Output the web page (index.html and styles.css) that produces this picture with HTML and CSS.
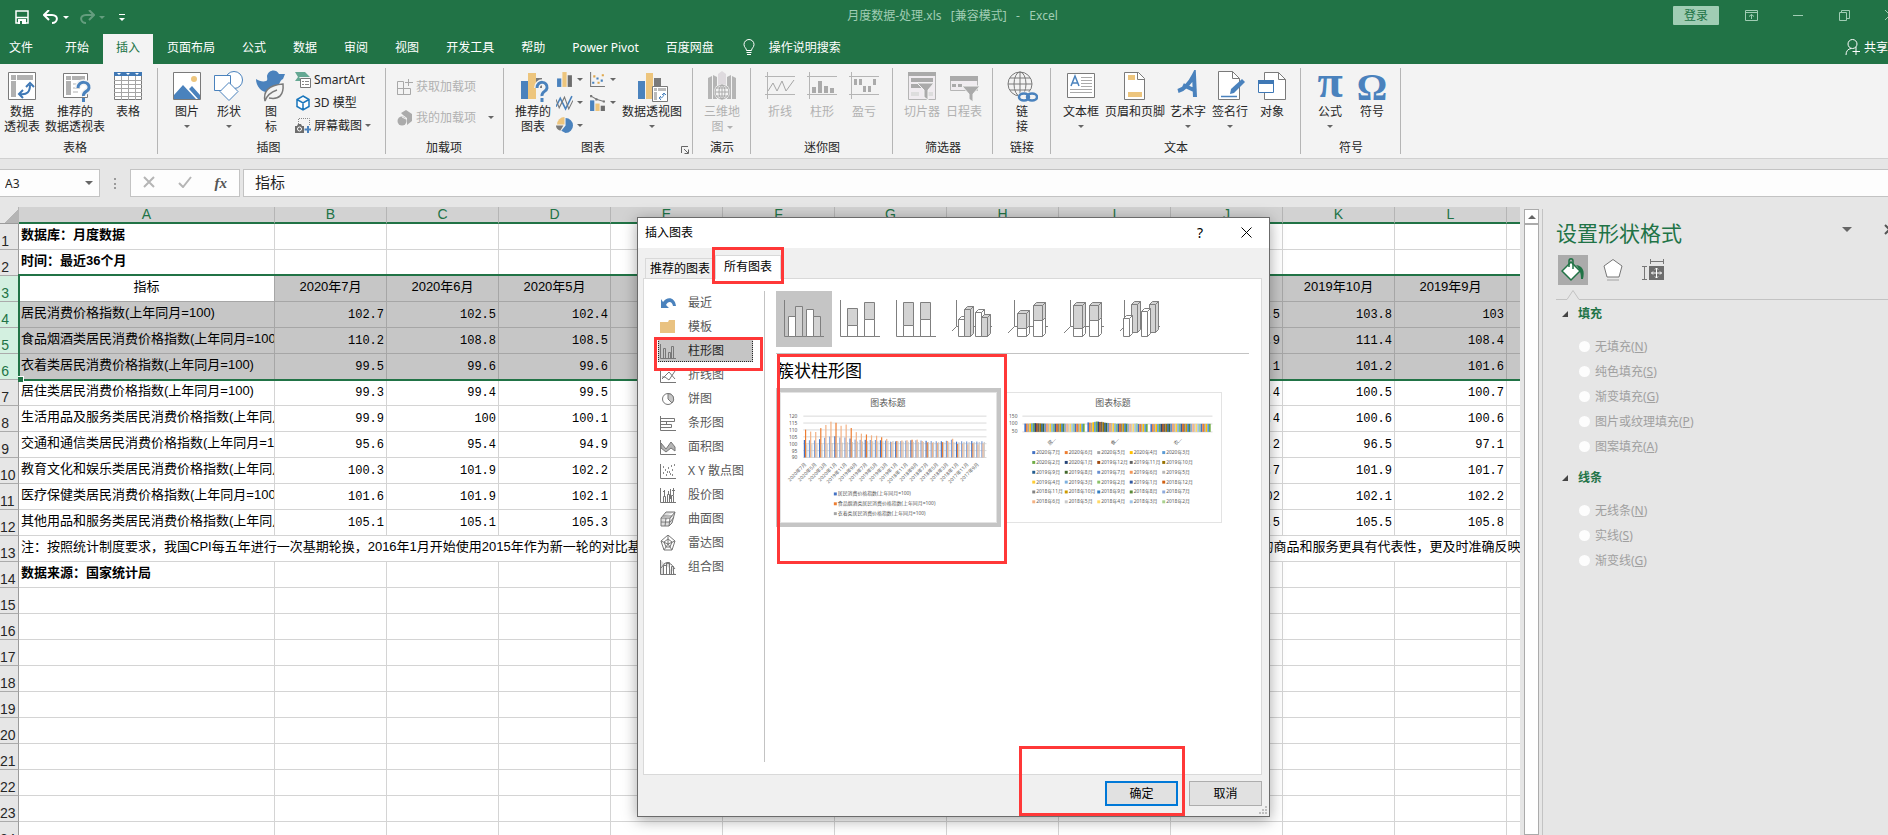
FILE: index.html
```html
<!DOCTYPE html>
<html lang="zh-CN">
<head>
    <meta charset="UTF-8">
    <meta name="viewport" content="width=device-width, initial-scale=1.0">
    <title>月度数据-处理.xls - Excel</title>
    <link rel="stylesheet" href="styles.css">
</head>
<body>
    <header class="title-bar">
        <div class="quick-access">
            <button aria-label="保存"><svg width="14" height="14" viewBox="0 0 14 14"><path d="M1 1h12v12H1zM1 7.500h12" fill="none" stroke="#fff" stroke-width="1.500"/><path d="M3 9h8v5H3z" fill="#fff"/><path d="M5 11h2v3H5z" fill="#217346"/></svg></button>
            <button class="undo" aria-label="撤消"><svg width="16" height="14" viewBox="0 0 16 14"><path d="M6 0L1 5l5 5M2 5h7c7 0 6 8 0 8" fill="none" stroke="#fff" stroke-width="2"/></svg><i class="caret"></i></button>
            <button class="undo faded" aria-label="恢复"><svg width="16" height="14" viewBox="0 0 16 14"><path d="M10 0l5 5-5 5M14 5H7c-7 0-6 8 0 8" fill="none" stroke="#fff" stroke-width="2"/></svg><i class="caret"></i></button>
            <button class="more" aria-label="自定义快速访问工具栏"><i class="caret"></i></button>
        </div>
        <div class="doc-title">月度数据-处理.xls&nbsp;&nbsp; [兼容模式]&nbsp;&nbsp; -&nbsp;&nbsp; Excel</div>
        <div class="window-buttons">
            <button class="login">登录</button>
            <button aria-label="功能区显示选项"><svg width="13" height="11" viewBox="0 0 13 11"><path d="M.5.5h12v10H.5zM0 2.500h13M6.500 9V4.500M4 6.500l2.500-2 2.500 2" fill="none" stroke="#a0cdb4"/></svg></button>
            <button aria-label="最小化"><svg width="11" height="11" viewBox="0 0 11 11"><path d="M0 5.500h10" stroke="#a0cdb4"/></svg></button>
            <button aria-label="还原"><svg width="11" height="11" viewBox="0 0 11 11"><path d="M.5 2.500h7v8h-7zM2.500 2V.5h8v8H8" fill="none" stroke="#a0cdb4"/></svg></button>
            <button aria-label="关闭"><svg width="11" height="11" viewBox="0 0 11 11"><path d="M0 0l10 10M10 0L0 10" stroke="#a0cdb4"/></svg></button>
        </div>
    </header>

    <nav class="tabs">
        <button class="file">文件</button>
        <button>开始</button>
        <button class="active">插入</button>
        <button>页面布局</button>
        <button>公式</button>
        <button>数据</button>
        <button>审阅</button>
        <button>视图</button>
        <button>开发工具</button>
        <button>帮助</button>
        <button>Power Pivot</button>
        <button>百度网盘</button>
        <button class="tell-me"><svg width="12" height="17" viewBox="0 0 12 17"><path d="M3.500 11.500C3.500 9 1 8.500 1 5.500a5 5 0 0 1 10 0c0 3-2.500 3.500-2.500 6zM3.500 13.500h5M4 15.500h4" fill="none" stroke="#fff"/></svg>操作说明搜索</button>
        <button class="share"><svg width="16" height="17" viewBox="0 0 16 17"><path d="M1 16c0-4 2-6 5-6.500M11 16v-8M7.500 12.500H15" fill="none" stroke="#fff"/><circle cx="7.500" cy="5" r="4.500" fill="none" stroke="#fff"/></svg>共享</button>
    </nav>

    <div class="ribbon">
        <div class="group first">
            <div class="tools">
                <button class="big"><svg viewBox="0 0 32 32"><path d="M2.500 2.500h27v27h-27z" fill="#fff" stroke="#7a7a7a"/><path d="M5 5h5v5H5zM11 5h16v5H11zM5 11h5v16H5z" fill="#b1b1b1"/><path d="M14 24c7 1 10-2 10-9M20 17l4-4 4 4M17 20l-4 4 4 4" fill="none" stroke="#3f78b5" stroke-width="2"/></svg><span>数据<br>透视表</span></button>
                <button class="big w64"><svg viewBox="0 0 32 32"><path d="M4.500 3.500h24v24h-24z" fill="#fff" stroke="#7a7a7a"/><path d="M7 6h5v4H7zM13 6h13v4H13zM7 11h5v14H7z" fill="#b1b1b1"/><path d="M14 14h9M14 18h7M14 22h5" stroke="#b1b1b1"/><path d="M19 18c0-8 12-7 11 0-.5 4-6 3-5.500 8M24.500 28v4" fill="none" stroke="#f3f3f3" stroke-width="6"/><path d="M19 18c0-8 12-7 11 0-.5 4-6 3-5.500 8M24.500 28v4" fill="none" stroke="#4a82bd" stroke-width="3"/></svg><span>推荐的<br>数据透视表</span></button>
                <button class="big"><svg viewBox="0 0 32 32"><path d="M2.500 2.500h27v27h-27z" fill="#fff" stroke="#7a7a7a"/><path d="M2 2h28v4H2z" fill="#3f78b5"/><path d="M5 3h4l-2 2zM14 3h4l-2 2zM23 3h4l-2 2z" fill="#fff"/><path d="M2 10.500h28M2 14.500h28M2 18.500h28M2 22.500h28M2 26.500h28M9.500 6v24M16.500 6v24M23.500 6v24" stroke="#a5a5a5"/></svg><span>表格</span></button>
            </div>
            <div class="group-name">表格</div>
        </div>
        <div class="group pictures">
            <div class="tools">
                <button class="big"><svg viewBox="0 0 32 32"><path d="M2.500 2.500h27v27h-27z" fill="#fff" stroke="#7a7a7a"/><path d="M3 28v-3l9-10 13 14H3zM18 19l3-3 8 9v4h-2z" fill="#4a82bd"/><circle cx="23" cy="9" r="3" fill="#edc57d"/></svg><span>图片</span><i class="caret"></i></button>
                <button class="big"><svg viewBox="0 0 32 32"><circle cx="21" cy="10" r="8.500" fill="#fff" stroke="#4a82bd"/><path d="M1.500 5.500h16v15h-16z" fill="#fff" stroke="#4a82bd"/><path d="M16 12.500l9 9-9 9-9-9z" fill="#fff" stroke="#4a82bd"/></svg><span>形状</span><i class="caret"></i></button>
                <button class="big"><svg viewBox="0 0 32 32"><path d="M1 9c3 2 7 3 10 2 2-1 1-3 1-5 1-6 9-8 12-2h6l-2 5c-4 2-3 6-7 10-4 5-12 4-16 0-3-3-4-7-4-10z" fill="#4a82bd"/><path d="M10 31c-2-9 3-16 18-17 1 11-4 16-14 14M10 31c2-6 6-9 12-11" fill="#f3f3f3" stroke="#7a7a7a" stroke-width="1.500"/></svg><span>图<br>标</span></button>
                <div class="small-tools">
                    <button><svg viewBox="0 0 16 16"><path d="M0 0h10l5 5H4l3 4H0l3-4z" fill="#65a893"/><path d="M5.500 6.500h10v9h-10z" fill="#fff" stroke="#777"/><path d="M7 9.500h2M10 9.500h4M7 12.500h2M10 12.500h4" stroke="#888"/></svg>SmartArt</button>
                    <button><svg viewBox="0 0 16 16"><path d="M8 1l6 3.500v7L8 15l-6-3.500v-7zM2 4.500L8 8l6-3.500M8 8v7" fill="#fff" stroke="#1976bc" stroke-width="1.500"/></svg>3D 模型</button>
                    <button><svg viewBox="0 0 16 16"><path d="M3.500 8V.5h11V8" fill="none" stroke="#888" stroke-dasharray="1 1"/><path d="M0 8h2l1-2h3l1 2h2v7H0z" fill="#6d6d6d"/><circle cx="4.500" cy="11" r="2" fill="none" stroke="#fff"/><path d="M13 8v7M9.500 11.500H16" stroke="#4a82bd" stroke-width="2"/></svg>屏幕截图<i class="caret"></i></button>
                </div>
            </div>
            <div class="group-name">插图</div>
        </div>
        <div class="group addins">
            <div class="tools">
                <div class="small-tools">
                    <button disabled><svg viewBox="0 0 16 16"><path d="M.5 2.500h6v13h-6zM.5 9.500h13v6h-13M11.500 0v7M8 3.500h8" fill="none" stroke="#a8a8a8"/></svg>获取加载项</button>
                    <button disabled><svg viewBox="0 0 16 16"><path d="M4 3l5-3 6 4v7l-5 4V8L6 5z" fill="#ababab"/><circle cx="5" cy="11" r="4.500" fill="#ababab"/><path d="M5 7l4 2" stroke="#f3f3f3"/></svg>我的加载项<i class="caret far"></i></button>
                </div>
            </div>
            <div class="group-name">加载项</div>
        </div>
        <div class="group charts">
            <div class="tools">
                <button class="big"><svg viewBox="0 0 32 32"><path d="M4 11h7v18H4z" fill="#4a82bd"/><path d="M11 3h8v26h-8z" fill="#edc57d"/><path d="M19 8h6v10h-6z" fill="#7a7a7a"/><path d="M20 18c0-8 11-7 10 0-.5 4-5.500 3-5 8M25 28v4" fill="none" stroke="#f3f3f3" stroke-width="6"/><path d="M20 18c0-8 11-7 10 0-.5 4-5.500 3-5 8M25 28v4" fill="none" stroke="#4a82bd" stroke-width="3"/></svg><span>推荐的<br>图表</span></button>
                <div class="chart-tools">
                    <button aria-label="柱形图"><svg viewBox="0 0 16 16"><path d="M1 7h4v8H1z" fill="#4a82bd"/><path d="M6 1h4v14H6z" fill="#edc57d"/><path d="M11 4h4v11h-4z" fill="#6d6d6d"/></svg><i class="caret"></i></button>
                    <button aria-label="散点图"><svg viewBox="0 0 16 16"><path d="M1.500 1v13.500H15" fill="none" stroke="#777"/><path d="M3 10h2v2H3zM7 6h2v2H7zM11 8h2v2h-2z" fill="#4a82bd"/><path d="M4 4h2v2H4zM8 10h2v2H8zM12 3h2v2h-2z" fill="#e0a84c"/></svg><i class="caret"></i></button>
                    <button aria-label="折线图"><svg viewBox="0 0 16 16"><path d="M0 12L4 4l5 10 6-12" fill="none" stroke="#4a82bd" stroke-width="1.500"/><path d="M0 5l3 8 5-10 4 11 4-8" fill="none" stroke="#777"/></svg><i class="caret"></i></button>
                    <button aria-label="组合图"><svg viewBox="0 0 16 16"><path d="M1 6h4v10H1z" fill="#4a82bd"/><path d="M6 9h4v7H6z" fill="#edc57d"/><path d="M11 11h4v5h-4z" fill="#6d6d6d"/><path d="M2 2l5 3 7 2" fill="none" stroke="#777"/><path d="M1 1h2v2H1zM6 4h2v2H6zM13 6h2v2h-2z" fill="#777"/></svg><i class="caret"></i></button>
                    <button aria-label="饼图"><svg viewBox="0 0 16 16"><path d="M9 1a7 7 0 0 1 0 14l-4-2 4-5z" fill="#4a82bd"/><path d="M8 7V0a7 7 0 0 0-7 7z" fill="#edc57d"/><path d="M0 8h7l-3 5c-3-1-4-3-4-5z" fill="#7a7a7a"/></svg><i class="caret"></i></button>
                </div>
                <button class="big w60"><svg viewBox="0 0 32 32"><path d="M2 11h7v18H2z" fill="#4a82bd"/><path d="M10 3h7v26h-7z" fill="#edc57d"/><path d="M18 8h7v10h-7z" fill="#7a7a7a"/><path d="M16.500 16.500h15v15h-15z" fill="#fff" stroke="#7a7a7a"/><path d="M18 18h3v3h-3zM22 18h8v3h-8zM18 22h3v8h-3z" fill="#bbb"/><path d="M23 28c4 0 5-2 5-5M26 25l2-2 2 2M25 26l-2 2 2 2" fill="none" stroke="#4a82bd"/></svg><span>数据透视图</span><i class="caret"></i></button>
            </div>
            <div class="group-name">图表</div>
            <button class="launcher" aria-label="查看所有图表"><svg width="8" height="8" viewBox="0 0 8 8"><path d="M.5 7V.5H7M3 3l4 4M7.500 3.500v4h-4" fill="none" stroke="#666"/></svg></button>
        </div>
        <div class="group">
            <div class="tools">
                <button class="big" disabled><svg viewBox="0 0 32 32"><path d="M2 8l4-2v23H2zM7 5l4 2v22H7zM21 7l4-2v24h-4zM26 6l4 2v21h-4z" fill="#b5b5b5"/><path d="M12 4l4-3 4 3v16h-8z" fill="#dedade"/><circle cx="16" cy="22" r="8" fill="#f3f3f3"/><path d="M9 22h14M16 15v14M10 18h12M10 26h12" stroke="#aaa"/><circle cx="16" cy="22" r="7" fill="none" stroke="#aaa"/><ellipse cx="16" cy="22" rx="3" ry="7" fill="none" stroke="#aaa"/></svg><span>三维地<br>图 <i class="caret inline"></i></span></button>
            </div>
            <div class="group-name">演示</div>
        </div>
        <div class="group">
            <div class="tools">
                <button class="big" disabled><svg viewBox="0 0 32 32"><path d="M1 6.500h30M1 24.500h30M3.500 2v27" fill="none" stroke="#b5b5b5"/><path d="M4 21l5-8 4 8 5-10 4 10 8-11" fill="none" stroke="#a5a5a5"/></svg><span>折线</span></button>
                <button class="big" disabled><svg viewBox="0 0 32 32"><path d="M1 6.500h30M1 24.500h30M3.500 2v27" fill="none" stroke="#b5b5b5"/><path d="M6 17h4v6H6zM12 11h4v12h-4zM18 16h4v7h-4zM24 18h4v5h-4z" fill="#aaa"/></svg><span>柱形</span></button>
                <button class="big" disabled><svg viewBox="0 0 32 32"><path d="M1 6.500h30M1 24.500h30M3.500 2v27" fill="none" stroke="#b5b5b5"/><path d="M6 9h3v6H6zM11 9h3v6h-3zM15 16h3v6h-3zM20 16h3v6h-3zM25 9h3v6h-3z" fill="#aaa"/></svg><span>盈亏</span></button>
            </div>
            <div class="group-name">迷你图</div>
        </div>
        <div class="group">
            <div class="tools">
                <button class="big" disabled><svg viewBox="0 0 32 32"><path d="M2.500 2.500h27v27h-27z" fill="#f0ecf0" stroke="#b5b5b5"/><path d="M2 2h28v4H2zM5 8h22v4H5zM5 14h10v4H5z" fill="#aaa"/><path d="M5 22h8v4H5zM22 22h5v4h-5z" fill="#ddd"/><path d="M11 13h17l-6 7v10l-4-3v-7z" fill="#aaa" stroke="#f3f3f3"/></svg><span>切片器</span></button>
                <button class="big" disabled><svg viewBox="0 0 32 32"><path d="M2.500 6.500h27v14h-27z" fill="#f0ecf0" stroke="#b5b5b5"/><path d="M2 6h28v5H2zM4 14h4v3H4zM10 14h4v3h-4z" fill="#aaa"/><path d="M14 16h18l-7 8v8l-4-3v-5z" fill="#aaa" stroke="#f3f3f3"/></svg><span>日程表</span></button>
            </div>
            <div class="group-name">筛选器</div>
        </div>
        <div class="group">
            <div class="tools">
                <button class="big"><svg viewBox="0 0 32 32"><g fill="none" stroke="#7a7a7a"><circle cx="14" cy="14" r="12"/><ellipse cx="14" cy="14" rx="6" ry="12"/><path d="M14 2v24M2 14h24M4 8h20M4 20h20"/></g><g fill="none" stroke="#f3f3f3" stroke-width="5"><ellipse cx="19" cy="27" rx="5" ry="3"/><ellipse cx="26" cy="27" rx="5" ry="3"/></g><g fill="none" stroke="#4a82bd" stroke-width="2.500"><ellipse cx="18" cy="27" rx="5" ry="3.500"/><ellipse cx="26" cy="27" rx="5" ry="3.500"/></g></svg><span>链<br>接</span></button>
            </div>
            <div class="group-name">链接</div>
        </div>
        <div class="group">
            <div class="tools">
                <button class="big w44"><svg viewBox="0 0 32 32"><path d="M2.500 3.500h27v24h-27z" fill="#fff" stroke="#7a7a7a"/><path d="M6 16l4-10 4 10M7 13h6" fill="none" stroke="#4a82bd" stroke-width="1.500"/><path d="M16 7.500h11M16 10.500h11M16 13.500h11M16 16.500h11M5 19.500h22M5 22.500h22" stroke="#aaa"/></svg><span>文本框</span><i class="caret"></i></button>
                <button class="big w64"><svg viewBox="0 0 32 32"><path d="M5.500 2.500h14l6 6v21h-20z" fill="#fff" stroke="#7a7a7a"/><path d="M18.500 2.500v7h7" fill="none" stroke="#7a7a7a"/><path d="M9 5h7v5H9zM9 22h14v5H9z" fill="#edc57d"/></svg><span>页眉和页脚</span></button>
                <button class="big"><svg viewBox="0 0 32 32"><path d="M6 21c7-2 12-8 16-16l1 22M11 15l13 6" fill="none" stroke="#4a82bd" stroke-width="4"/></svg><span>艺术字</span><i class="caret"></i></button>
                <button class="big"><svg viewBox="0 0 32 32"><path d="M4.500 1.500h14l7 7v21h-21z" fill="#fff" stroke="#7a7a7a"/><path d="M18.500 1.500v7h7" fill="none" stroke="#7a7a7a"/><path d="M7 26.500h16" stroke="#4a82bd" stroke-width="1.500"/><path d="M16 24l1-5L28 9l3 3-11 11z" fill="#4a82bd"/></svg><span>签名行</span><i class="caret"></i></button>
                <button class="big"><svg viewBox="0 0 32 32"><path d="M8.500 2.500h14l7 7v20h-21z" fill="#fff" stroke="#7a7a7a"/><path d="M22.500 2.500v7h7" fill="none" stroke="#7a7a7a"/><path d="M2.500 10.500h15v12h-15z" fill="#fff" stroke="#3f78b5"/><path d="M2 10h16v4H2z" fill="#3f78b5"/></svg><span>对象</span></button>
            </div>
            <div class="group-name">文本</div>
        </div>
        <div class="group">
            <div class="tools">
                <button class="big"><span class="glyph pi">π</span><span>公式</span><i class="caret"></i></button>
                <button class="big"><span class="glyph">Ω</span><span>符号</span></button>
            </div>
            <div class="group-name">符号</div>
        </div>
    </div>

    <div class="formula-bar">
        <div class="name-box"><input type="text" value="A3" aria-label="名称框"><i class="caret"></i></div>
        <span class="grip"></span>
        <div class="fx-buttons">
            <button aria-label="取消"><svg width="12" height="12" viewBox="0 0 12 12"><path d="M1 1l10 10M11 1L1 11" stroke="#b5b5b5" stroke-width="2"/></svg></button>
            <button aria-label="输入"><svg width="14" height="12" viewBox="0 0 14 12"><path d="M1 7l4 4 8-10" fill="none" stroke="#b5b5b5" stroke-width="2"/></svg></button>
            <button class="fx" aria-label="插入函数"><i>fx</i></button>
        </div>
        <input class="formula" type="text" value="指标" aria-label="编辑栏">
    </div>

    <main class="workspace">
        <div class="sheet">
            <table class="grid">
                <colgroup id="grid-cols"></colgroup>
                <thead id="grid-head"></thead>
                <tbody id="grid-body"></tbody>
            </table>
            <div class="selection"></div>
        </div>
        <div class="scrollbar">
            <button aria-label="向上滚动"><i class="caret up"></i></button>
            <div class="thumb"></div>
        </div>
        <aside class="pane">
            <div class="pane-head">
                <h2>设置形状格式</h2>
                <i class="caret"></i>
                <button aria-label="关闭窗格"><svg width="11" height="11" viewBox="0 0 11 11"><path d="M1 1l9 9M10 1l-9 9" stroke="#555" stroke-width="2"/></svg></button>
            </div>
            <div class="pane-icons">
                <button class="active" aria-label="填充与线条"><svg width="24" height="24" viewBox="0 0 24 24"><path d="M10 4l9 9-9 9-9-9z" fill="#fff" stroke="#217346" stroke-width="1.500"/><path d="M8 9V3c0-3 4-3 4 0v8" fill="none" stroke="#217346" stroke-width="1.500"/><path d="M15 7c7 1 9 6 7 14h-2c0-5-1-10-5-14z" fill="#217346"/></svg></button>
                <button aria-label="效果"><svg width="24" height="24" viewBox="0 0 24 24"><path d="M12 1.500l9 6.500-3 11H6L3 8z" fill="#fff" stroke="#777"/><path d="M6 21h12v2H6z" fill="#c4c4c4"/></svg></button>
                <button aria-label="大小与属性"><svg width="24" height="24" viewBox="0 0 24 24"><path d="M9 3.500h14M9.500 1v5M22.500 1v5M3.500 8v14M1 8.500h5M1 21.500h5" stroke="#777"/><path d="M8 8h15v14H8z" fill="#6d6d6d"/><path d="M15.500 10v10M10.500 15h10M14 11.500l1.500-1.500 1.500 1.500M14 18.500l1.500 1.500 1.500-1.500M12 13.500L10.500 15l1.500 1.500M19 13.500l1.500 1.500-1.500 1.500" fill="none" stroke="#fff"/></svg></button>
            </div>
            <svg class="pane-rule" height="12" aria-hidden="true"><path d="M0 10.500h11l6-9 6 9h400" fill="none" stroke="#c3c3c3"/></svg>
            <section>
                <h3>填充</h3>
                <label><input type="radio" name="fill" disabled>无填充(<u>N</u>)</label>
                <label><input type="radio" name="fill" disabled>纯色填充(<u>S</u>)</label>
                <label><input type="radio" name="fill" disabled>渐变填充(<u>G</u>)</label>
                <label><input type="radio" name="fill" disabled>图片或纹理填充(<u>P</u>)</label>
                <label><input type="radio" name="fill" disabled>图案填充(<u>A</u>)</label>
            </section>
            <section>
                <h3>线条</h3>
                <label><input type="radio" name="line" disabled>无线条(<u>N</u>)</label>
                <label><input type="radio" name="line" disabled>实线(<u>S</u>)</label>
                <label><input type="radio" name="line" disabled>渐变线(<u>G</u>)</label>
            </section>
        </aside>
    </main>

    <div class="dialog" role="dialog" aria-label="插入图表">
        <div class="dialog-title">
            <span>插入图表</span>
            <button aria-label="帮助">?</button>
            <button aria-label="关闭"><svg width="11" height="11" viewBox="0 0 11 11"><path d="M.5.5l10 10M10.500.5l-10 10" stroke="#000"/></svg></button>
        </div>
        <div class="dialog-tabs">
            <button>推荐的图表</button>
            <button class="active">所有图表</button>
            <span class="mark mark-tab"></span>
        </div>
        <div class="dialog-panel">
            <ul class="kinds">
                <li><button><svg viewBox="0 0 16 16"><path d="M1 4v9h8L6 10c2-4 6-4 7 1h3C15 2 7 1 3 7z" fill="#4a82bd"/></svg>最近</button></li>
                <li><button><svg viewBox="0 0 16 16"><path d="M0 3h8l1-2h6v13H0z" fill="#e9c281"/></svg>模板</button></li>
                <li class="active"><button><svg viewBox="0 0 16 16"><path d="M.5 1v14.500H16M3.500 5.500h2v10h-2zM8.500 9.500h2v6h-2zM11.500 3.500h2v12h-2z" fill="none" stroke="#777"/></svg>柱形图</button><span class="mark mark-kind"></span></li>
                <li><button><svg viewBox="0 0 16 16"><path d="M.5 1v14.500H16M2 12l7-7 6 7M2 10h3l4 3 6-9" fill="none" stroke="#777"/></svg>折线图</button></li>
                <li><button><svg viewBox="0 0 16 16"><circle cx="8" cy="8" r="5.500" fill="#fff" stroke="#777"/><path d="M8 2.500a5.500 5.500 0 0 1 4 9.500L8 8z" fill="#c5c5c5" stroke="#777"/></svg>饼图</button></li>
                <li><button><svg viewBox="0 0 16 16"><path d="M.5 1v14.500H16M.5 3.500h14v3H.5zM.5 6.500h6v3h-6zM.5 9.500h11v3H.5z" fill="none" stroke="#777"/></svg>条形图</button></li>
                <li><button><svg viewBox="0 0 16 16"><path d="M1 4l5 6 5-7 4 5v4l-4-3-5 4-5-4z" fill="#b5b5b5" stroke="#777"/><path d="M.5 1v14.500H16" fill="none" stroke="#777"/></svg>面积图</button></li>
                <li><button><svg viewBox="0 0 16 16"><path d="M.5 1v14.500H16" fill="none" stroke="#777"/><path d="M3 10h1M5 7h1M6 12h1M8 5h1M9 9h1M11 3h1M12 7h1M14 2h1M3 4h1M12 12h1M10 11h1M7 9h1" stroke="#666" stroke-width="1.500"/></svg>X Y 散点图</button></li>
                <li><button><svg viewBox="0 0 16 16"><path d="M.5 1v14.500H16M3.500 9.500h2v6h-2zM7.500 7.500h2v8h-2zM11.500 8.500h2v7h-2zM4.500 3v6M8.500 4v4M10.500 2v10M13.500 1v7M3 4.500h2M12 3.500h3" fill="none" stroke="#777"/></svg>股价图</button></li>
                <li><button><svg viewBox="0 0 16 16"><path d="M1 7l5-6h9l-3 11-3 3H1zM1 7h9l5-6M10 7l-1 8M3 5h9M1 11h9l4-5M6 7L5 15" fill="#ddd" stroke="#777"/></svg>曲面图</button></li>
                <li><button><svg viewBox="0 0 16 16"><path d="M8 0l7 6-3 9H4L1 6zM8 4l4 3-2 5H6L4 7zM8 0v9M15 6L8 9l4 6M1 6l7 3-4 6" fill="none" stroke="#777"/></svg>雷达图</button></li>
                <li><button><svg viewBox="0 0 16 16"><path d="M.5 1v14.500H16M3.500 6.500h3v9h-3zM6.500 3.500h3v12h-3zM11.500 7.500h2v8h-2z" fill="#ddd" stroke="#777"/><path d="M1 9l4-5 6 1 4 5" fill="none" stroke="#777"/></svg>组合图</button></li>
            </ul>
            <div class="detail">
                <div class="subtypes" id="subtypes"></div>
                <div class="preview-area">
                    <h2>簇状柱形图</h2>
                    <div class="previews">
                        <button class="preview active" aria-label="按月份分组"><svg id="chart-by-month" viewBox="0 0 217 131"></svg></button>
                        <button class="preview" aria-label="按指标分组"><svg id="chart-by-index" viewBox="0 0 217 131"></svg></button>
                    </div>
                    <span class="mark mark-preview"></span>
                </div>
            </div>
        </div>
        <div class="dialog-foot">
            <button class="primary">确定</button>
            <button>取消</button>
            <span class="mark mark-ok"></span>
        </div>
        <svg class="resize" width="9" height="9" viewBox="0 0 9 9"><path d="M6 0h2v2H6zM3 3h2v2H3zM6 3h2v2H6zM0 6h2v2H0zM3 6h2v2H3zM6 6h2v2H6z" fill="#bfbfbf"/></svg>
    </div>

    <script>
        const letters = ['A', 'B', 'C', 'D', 'E', 'F', 'G', 'H', 'I', 'J', 'K', 'L', ''];
        const note = '注：按照统计制度要求，我国CPI每五年进行一次基期轮换，2016年1月开始使用2015年作为新一轮的对比基期，前三轮基期分别为2000年、2005年和2010年。与上轮基期相比，新基期的调查目录和网点有调整，采集的商品和服务更具有代表性，更及时准确反映居民消费价格';
        const rows = {
            1: ['数据库：月度数据'],
            2: ['时间：最近36个月'],
            3: ['指标', '2020年7月', '2020年6月', '2020年5月', '', '', '', '', '', '', '2019年10月', '2019年9月'],
            4: ['居民消费价格指数(上年同月=100)', '102.7', '102.5', '102.4', '', '', '', '', '', '104.5', '103.8', '103'],
            5: ['食品烟酒类居民消费价格指数(上年同月=100)', '110.2', '108.8', '108.5', '', '', '', '', '', '113.9', '111.4', '108.4'],
            6: ['衣着类居民消费价格指数(上年同月=100)', '99.5', '99.6', '99.6', '', '', '', '', '', '101.1', '101.2', '101.6'],
            7: ['居住类居民消费价格指数(上年同月=100)', '99.3', '99.4', '99.5', '', '', '', '', '', '100.4', '100.5', '100.7'],
            8: ['生活用品及服务类居民消费价格指数(上年同月=100)', '99.9', '100', '100.1', '', '', '', '', '', '100.4', '100.6', '100.6'],
            9: ['交通和通信类居民消费价格指数(上年同月=100)', '95.6', '95.4', '94.9', '', '', '', '', '', '97.2', '96.5', '97.1'],
            10: ['教育文化和娱乐类居民消费价格指数(上年同月=100)', '100.3', '101.9', '102.2', '', '', '', '', '', '101.7', '101.9', '101.7'],
            11: ['医疗保健类居民消费价格指数(上年同月=100)', '101.6', '101.9', '102.1', '', '', '', '', '', '102', '102.1', '102.2'],
            12: ['其他用品和服务类居民消费价格指数(上年同月=100)', '105.1', '105.1', '105.3', '', '', '', '', '', '104.5', '105.5', '105.8'],
            14: ['数据来源：国家统计局']
        };

        function drawGrid() {
            document.getElementById('grid-cols').innerHTML =
                '<col class="col-num"><col class="col-first">' + '<col class="col-data">'.repeat(12);
            document.getElementById('grid-head').innerHTML =
                '<tr><th class="corner"></th>' + letters.map(l => `<th>${l}</th>`).join('') + '</tr>';
            let html = '';
            for (let r = 1; r <= 24; r++) {
                const cells = rows[r] || [];
                let cls = r >= 3 && r <= 6 ? 'selected' : '';
                if (r === 3) cls += ' heading';
                if (r < 3 || r === 14) cls = 'bold';
                html += `<tr class="${cls}"><th>${r}</th>`;
                if (r === 13) {
                    html += `<td colspan="13">${note}</td>`;
                } else {
                    html += letters.map((l, i) => `<td>${cells[i] || ''}</td>`).join('');
                }
                html += '</tr>';
            }
            document.getElementById('grid-body').innerHTML = html;
        }

        // one bar of a subtype icon, d is the depth of the 3D ones
        function bar(x, w, top, bottom, fill, d = 0) {
            let s = `<path d="M${x} ${top}h${w}V${bottom}h${-w}z" fill="${fill}"/>`;
            if (d) {
                s += `<path d="M${x} ${top}l${d} ${-d}h${w}l${-d} ${d}z" fill="${fill}"/>`;
                s += `<path d="M${x + w} ${top}l${d} ${-d}V${bottom - d}l${-d} ${d}z" fill="${fill}"/>`;
            }
            return s;
        }
        const g = '#d3d3d3';
        const w = '#fff';
        const flat = '<path d="M8.500 9v36.500H48" fill="none"/>';
        const deep = '<path d="M14.500 9v26.500L8 42M14.500 35.500H48" fill="none"/>';
        const deepLeft = '<path d="M12.500 9v26.500L8 40M12.500 35.500H48" fill="none"/>';
        const subtypes = [
            ['簇状柱形图', flat + bar(12.5, 7, 25.5, 45.5, w) + bar(19.5, 7, 15.5, 45.5, g) + bar(30.5, 7, 18.5, 45.5, w) + bar(37.5, 7, 25.5, 45.5, g)],
            ['堆积柱形图', flat + bar(15.5, 10, 17.5, 34.5, g) + bar(15.5, 10, 34.5, 45.5, w) + bar(32.5, 10, 11.5, 28.5, g) + bar(32.5, 10, 28.5, 45.5, w)],
            ['百分比堆积柱形图', flat + bar(15.5, 10, 11.5, 34.5, g) + bar(15.5, 10, 34.5, 45.5, w) + bar(32.5, 10, 11.5, 28.5, g) + bar(32.5, 10, 28.5, 45.5, w)],
            ['三维簇状柱形图', deepLeft + bar(14.5, 6, 28.5, 45.5, w, 3) + bar(20.5, 6, 18.5, 45.5, g, 3) + bar(31.5, 6, 21.5, 45.5, w, 3) + bar(37.5, 6, 26.5, 45.5, g, 3)],
            ['三维堆积柱形图', deep + bar(17.5, 9, 37.5, 45.5, w, 3) + bar(17.5, 9, 22.5, 37.5, g, 3) + bar(33.5, 9, 29.5, 45.5, w, 3) + bar(33.5, 9, 14.5, 29.5, g, 3)],
            ['三维百分比堆积柱形图', deep + bar(17.5, 9, 37.5, 45.5, w, 3) + bar(17.5, 9, 14.5, 37.5, g, 3) + bar(33.5, 9, 29.5, 45.5, w, 3) + bar(33.5, 9, 14.5, 29.5, g, 3)],
            ['三维柱形图', deepLeft + bar(19.5, 6, 13.5, 41.5, g, 3) + bar(11.5, 6, 27.5, 45.5, w, 3) + bar(37.5, 6, 13.5, 41.5, g, 3) + bar(29.5, 6, 20.5, 45.5, w, 3)]
        ];
        function drawSubtypes() {
            document.getElementById('subtypes').innerHTML = subtypes.map(([name, art], i) =>
                `<button class="${i === 0 ? 'active' : ''}" aria-label="${name}"><svg width="56" height="56" viewBox="0 0 56 56" stroke="#7f7f7f">${art}</svg></button>`).join('');
        }

        const cpi = [102.7, 102.5, 102.4, 103.3, 104.3, 105.2, 105.4, 104.5, 104.5, 103.8, 103, 102.8, 102.8, 102.7, 102.7, 102.5, 102.3, 101.5, 101.7, 101.9, 102.2, 102.5, 102.5, 102.3, 102.1, 101.9, 101.8, 101.8, 102.1, 102.9, 101.5, 101.8, 101.7, 101.9, 101.6, 101.8];
        const food = [110.2, 108.8, 108.5, 111.3, 113.6, 116, 115.2, 113, 113.9, 111.4, 108.4, 107.3, 106.7, 106.1, 105.8, 104.7, 103.5, 101.2, 102, 102.4, 102.5, 102.9, 103, 101.9, 101, 100.8, 100.7, 101.1, 102, 103.6, 99.8, 100, 99.6, 100.2, 99.5, 100.1];
        const clothes = [99.5, 99.6, 99.6, 99.6, 99.8, 100.5, 100.6, 100.8, 101.1, 101.2, 101.6, 101.6, 101.8, 101.8, 101.7, 101.8, 102, 102, 101.6, 101.5, 101.4, 101.4, 101.2, 101.3, 101.2, 101.1, 101.1, 101.1, 101.1, 101.1, 101.1, 101.3, 101.2, 101.2, 101.3, 101.3];
        const months = [];
        for (let i = 0, y = 2020, m = 7; i < 36; i++) {
            months.push(`${y}年${m}月`);
            m--;
            if (m === 0) { m = 12; y--; }
        }

        function drawMonthChart() {
            let s = '<text class="chart-title" x="108" y="13">图表标题</text>';
            for (let i = 0; i < 7; i++) {
                const y = 23.5 + i * 7;
                s += `<path d="M22 ${y}h186" stroke="#d9d9d9"/><text class="axis" x="16" y="${y + 2}">${120 - i * 5}</text>`;
            }
            months.forEach((name, i) => {
                const x = 22.5 + i * 5.15;
                [[cpi, '#7f9fd6'], [food, '#f3b183'], [clothes, '#c9c9c9']].forEach(([data, color], k) => {
                    const h = (data[i] - 90) * 1.4;
                    const fill = i % 3 === 0 && k < 2 ? ['#4472c4', '#ed7d31'][k] : color;
                    s += `<rect x="${x + k * 1.2}" y="${65.5 - h}" width="1.2" height="${h}" fill="${fill}"/>`;
                });
                if (i % 2 === 0) {
                    s += `<text class="axis" transform="translate(${x + 3} 73) rotate(-45)">${name}</text>`;
                }
            });
            [['#4472c4', rows[4][0]], ['#ed7d31', rows[5][0]], ['#a5a5a5', rows[6][0]]].forEach(([color, name], i) => {
                s += `<rect x="53" y="${101 + i * 10}" width="3" height="3" fill="${color}"/><text class="legend" x="57" y="${104 + i * 10}">${name}</text>`;
            });
            document.getElementById('chart-by-month').innerHTML = s;
        }

        const palette = ['#4472c4', '#ed7d31', '#a5a5a5', '#ffc000', '#5b9bd5', '#70ad47', '#264478', '#9e480e', '#636363', '#997300', '#255e91', '#43682b', '#698ed0', '#f1975a', '#b7b7b7', '#ffcd33', '#7cafdd', '#8cc168', '#335aa1', '#d26012', '#848484', '#cc9a00', '#327dc2', '#5a8a39', '#8faadc', '#f4b183', '#c9c9c9', '#ffd966', '#9dc3e6', '#a9d18e'];
        function drawIndexChart() {
            let s = '<text class="chart-title" x="108" y="13">图表标题</text>';
            [150, 100, 50].forEach((v, i) => {
                s += `<path d="M16 ${23.5 + i * 8}h193" stroke="#d9d9d9"/><text class="axis" x="11" y="${25 + i * 8}">${v}</text>`;
            });
            [cpi, food, clothes].forEach((data, k) => {
                data.forEach((v, i) => {
                    const h = (v - 50) * 0.16;
                    s += `<rect x="${18 + k * 64 + i * 1.7}" y="${39.5 - h}" width="1.7" height="${h}" fill="${palette[i % 30]}"/>`;
                });
                s += `<text class="axis" transform="translate(${50 + k * 64} 47) rotate(-45)">${'居食衣'[k]}…</text>`;
            });
            months.slice(0, 30).forEach((name, i) => {
                const x = 26 + (i % 5) * 33;
                const y = 59 + Math.floor(i / 5) * 10;
                s += `<rect x="${x}" y="${y}" width="3" height="3" fill="${palette[i]}"/><text class="legend" x="${x + 4}" y="${y + 3}">${name}</text>`;
            });
            document.getElementById('chart-by-index').innerHTML = s;
        }

        drawGrid();
        drawSubtypes();
        drawMonthChart();
        drawIndexChart();
    </script>
</body>
</html>
```
FILE: styles.css
```css
* {
    box-sizing: border-box;
}
body {
    margin: 0;
    height: 100vh;
    display: flex;
    flex-direction: column;
    overflow: hidden;
    position: relative;
    background-color: #e6e6e6;
    color: #262626;
    font-family: "Noto Sans", "Noto Sans CJK SC", sans-serif;
    font-size: 12px;
    line-height: 15px;
}
button, input {
    font: inherit;
    color: inherit;
    border: none;
    background: none;
    padding: 0;
    margin: 0;
}
h2, h3, ul {
    margin: 0;
    padding: 0;
    font-weight: normal;
    list-style: none;
}
.caret {
    display: inline-block;
    border: 3px solid transparent;
    border-top-color: #666;
    border-bottom: none;
}

/* title bar */
.title-bar {
    background-color: #217346;
    height: 34px;
    flex: none;
    display: grid;
    grid-template-columns: 1fr auto 1fr;
    align-items: center;
    color: #a0cdb4;
    padding-bottom: 4px;
}
.quick-access {
    display: flex;
    align-items: center;
    gap: 14px;
    padding: 4px 0 0 15px;
}
.quick-access button {
    display: flex;
    align-items: center;
    gap: 4px;
}
.quick-access .caret {
    border-top-color: #fff;
}
.quick-access .undo + .undo {
    margin-left: -4px;
}
.quick-access .faded {
    opacity: 0.3;
}
.quick-access .more {
    border-top: 1px solid #fff;
    padding-top: 3px;
}
.doc-title {
    padding-left: 17px;
}
.window-buttons {
    display: flex;
    align-items: center;
    justify-content: flex-end;
    gap: 35px;
    margin-right: -8px;
}
.window-buttons button {
    display: flex;
}
.window-buttons .login {
    background-color: #a0cdb4;
    color: #217346;
    padding: 2px 11px;
    border-radius: 1px;
    margin-right: -9px;
}

/* ribbon tabs */
.tabs {
    background-color: #217346;
    height: 30px;
    flex: none;
    display: flex;
    gap: 1px;
    color: #fff;
}
.tabs button {
    padding: 0 13px 3px;
    white-space: nowrap;
}
.tabs .file {
    padding: 0 18px 3px 9px;
}
.tabs .active {
    background-color: #f3f3f3;
    color: #217346;
}
.tabs .tell-me {
    display: flex;
    align-items: center;
    gap: 14px;
    padding-left: 15px;
}
.tabs .share {
    display: flex;
    align-items: center;
    gap: 3px;
    margin-left: auto;
    padding-right: 0;
}

/* ribbon */
.ribbon {
    background-color: #f3f3f3;
    border-bottom: 1px solid #d0d0d0;
    height: 95px;
    flex: none;
    display: flex;
    padding-top: 4px;
}
.group {
    height: 86px;
    padding: 0 7px 0 8px;
    border-right: 1px solid #b5b5b5;
    position: relative;
    white-space: nowrap;
}
.group.first {
    padding: 0 8px 0 1px;
}
.group.pictures {
    padding-right: 14px;
}
.tools {
    display: flex;
    height: 70px;
}
.group-name {
    text-align: center;
    line-height: 19px;
}
.big {
    width: 42px;
    display: flex;
    flex-direction: column;
    justify-content: flex-start;
    align-items: center;
    text-align: center;
    padding-top: 2px;
    height: 68px;
}
.big svg {
    display: block;
    flex: none;
    width: 32px;
    height: 32px;
    margin-bottom: 2px;
}
.big .caret {
    margin-top: 6px;
}
.big .caret.inline {
    margin: 0 0 2px;
}
.w44 {
    width: 44px;
}
.w60 {
    width: 60px;
}
.w64 {
    width: 64px;
}
.group button:disabled {
    color: #b1b1b1;
}
.group button:disabled .caret {
    border-top-color: #b1b1b1;
}
.glyph {
    font-family: "Liberation Serif", serif;
    font-weight: bold;
    font-size: 38px;
    line-height: 34px;
    height: 34px;
    color: #4a82bd;
}
.glyph.pi {
    font-size: 46px;
    line-height: 24px;
}
.small-tools {
    padding: 0 0 0 3px;
}
.small-tools button {
    display: flex;
    align-items: center;
    gap: 3px;
    height: 23px;
}
.small-tools svg {
    width: 16px;
    height: 16px;
}
.addins .small-tools {
    padding-top: 3px;
}
.addins .small-tools button {
    height: 31px;
}
.small-tools .far {
    margin-left: 9px;
}
.addins button:disabled .caret {
    border-top-color: #666;
}
.group.addins {
    padding-right: 9px;
}
.chart-tools {
    display: grid;
    grid-template-columns: 33px 33px;
    grid-auto-rows: 23px;
    padding-left: 2px;
}
.chart-tools button {
    display: flex;
    align-items: center;
    gap: 4px;
}
.chart-tools svg {
    width: 17px;
    height: 17px;
}
.group.charts {
    padding-right: 10px;
}
.charts .group-name {
    padding-right: 8px;
}
.launcher {
    position: absolute;
    right: 3px;
    bottom: 0;
    display: flex;
}

/* formula bar */
.formula-bar {
    flex: none;
    display: flex;
    height: 28px;
    margin: 10px 0;
}
.name-box, .fx-buttons, .formula {
    background-color: #fdfdfd;
    border: 1px solid #c3c3c3;
}
.name-box {
    width: 100px;
    border-left: none;
    display: flex;
    align-items: center;
    padding: 0 6px 0 5px;
}
.name-box input {
    width: 80px;
    flex: 1;
}
.name-box .caret {
    border-width: 4px 4px 0;
}
.grip {
    width: 30px;
    display: flex;
    align-items: center;
    justify-content: center;
}
.grip::before {
    content: "";
    height: 11px;
    border-left: 2px dotted #9a9a9a;
}
.fx-buttons {
    width: 110px;
    display: flex;
    align-items: center;
    justify-content: space-between;
    padding: 0 12px;
    margin-right: 3px;
}
.fx {
    font: bold 15px "Liberation Serif", serif;
    color: #555;
}
.formula {
    flex: 1;
    min-width: 0;
    font-size: 15px;
    padding: 0 11px 4px;
    border-right: none;
}

/* sheet */
.workspace {
    flex: 1;
    display: flex;
    min-height: 0;
}
.sheet {
    flex: 1;
    min-width: 0;
    overflow: hidden;
    position: relative;
    font-family: "Liberation Sans", "Noto Sans CJK SC", sans-serif;
    font-size: 13px;
    color: #000;
}
.grid {
    table-layout: fixed;
    width: 1619px;
    border-collapse: separate;
    border-spacing: 0;
}
.col-num {
    width: 19px;
}
.col-first {
    width: 256px;
}
.col-data {
    width: 112px;
}
.grid th {
    font-weight: normal;
    font-size: 14px;
    padding: 0;
}
.grid thead th {
    height: 17px;
    line-height: 15px;
    background-color: #d2d2d2;
    color: #217346;
    border-right: 1px solid #b5b5b5;
    border-bottom: 2px solid #217346;
}
.grid thead .corner {
    background: linear-gradient(135deg, #e6e6e6 60%, #b5b5b5 60%);
    border-bottom: 1px solid #9b9b9b;
}
.grid tbody th {
    height: 26px;
    line-height: 16px;
    vertical-align: bottom;
    background-color: #e6e6e6;
    border-right: 1px solid #9b9b9b;
    border-bottom: 1px solid #ababab;
    color: #262626;
    text-align: right;
    padding-right: 5px;
}
.grid tbody tr:nth-child(-n+9) th {
    padding-right: 9px;
}
.grid td {
    height: 26px;
    padding: 0 2px;
    line-height: 24px;
    background-color: #fff;
    border-right: 1px solid #d4d4d4;
    border-bottom: 1px solid #d4d4d4;
    overflow: hidden;
    white-space: nowrap;
    text-align: right;
    vertical-align: bottom;
    font-family: "Liberation Mono", monospace;
    font-size: 12px;
}
.grid td:nth-child(2),
.grid .heading td {
    font-family: "Liberation Sans", "Noto Sans CJK SC", sans-serif;
    font-size: 13px;
    line-height: 22px;
    text-align: left;
    vertical-align: top;
}
.grid .bold td {
    font-weight: bold;
}
.grid .selected td {
    background-color: #c6c6c6;
    border-color: #a6a6a6;
}
.grid .selected th {
    background-color: #d3f0e0;
    color: #217346;
}
.grid .heading td {
    text-align: center;
}
.grid .heading td:nth-child(2) {
    background-color: #fff;
}
.selection {
    position: absolute;
    left: 18px;
    right: -4px;
    top: 67px;
    height: 107px;
    border: 2px solid #217346;
}
.selection::after {
    content: "";
    position: absolute;
    left: -2px;
    bottom: -3px;
    width: 5px;
    height: 5px;
    background-color: #217346;
    border: solid #fff;
    border-width: 1px 1px 0 0;
}
.scrollbar {
    flex: none;
    width: 15px;
    margin: 2px 3px 0 4px;
    display: flex;
    flex-direction: column;
}
.scrollbar button, .thumb {
    border: 1px solid #ababab;
    background-color: #fff;
}
.scrollbar button {
    height: 15px;
    display: flex;
    align-items: center;
    justify-content: center;
}
.thumb {
    flex: 1;
}
.caret.up {
    border: 4px solid transparent;
    border-bottom-color: #666;
    border-top: none;
}

/* format pane */
.pane {
    flex: none;
    width: 346px;
    margin-top: 2px;
    border-left: 1px solid #c3c3c3;
    padding-left: 13px;
    overflow: hidden;
}
.pane-head {
    display: flex;
    align-items: center;
    padding-top: 8px;
    height: 39px;
}
.pane-head h2 {
    flex: 1;
    font-size: 21px;
    line-height: 30px;
    color: #217346;
}
.pane-head .caret {
    border-width: 5px 5px 0;
    margin: 0 32px 6px 0;
}
.pane-head button {
    margin: 0 -7px 6px 0;
    display: flex;
}
.pane-icons {
    display: flex;
    gap: 10px;
    padding: 7px 0 0 2px;
}
.pane-icons button {
    width: 30px;
    height: 30px;
    display: flex;
    align-items: center;
    justify-content: center;
}
.pane-icons .active {
    background-color: #ababab;
}
.pane-rule {
    display: block;
    width: 100%;
    margin-top: 4px;
}
.pane section {
    padding: 3px 0 6px 6px;
}
.pane h3 {
    color: #217346;
    font-size: 12px;
    font-weight: bold;
    line-height: 20px;
    margin-bottom: 10px;
    display: flex;
    align-items: center;
}
.pane h3::before {
    content: "";
    border: 3px solid transparent;
    border-right-color: #444;
    border-bottom-color: #444;
    margin-right: 10px;
}
.pane label {
    display: flex;
    align-items: center;
    height: 25px;
    padding-left: 17px;
    color: #a0a0a0;
}
.pane label input {
    appearance: none;
    width: 11px;
    height: 11px;
    border-radius: 50%;
    background-color: #fdfdfd;
    margin-right: 5px;
}

/* insert chart dialog */
.dialog {
    position: absolute;
    left: 637px;
    top: 217px;
    width: 633px;
    height: 600px;
    border: 1px solid #6b6b6b;
    background-color: #f0f0f0;
    box-shadow: 0 3px 14px rgba(0, 0, 0, 0.35);
    display: flex;
    flex-direction: column;
    color: #000;
}
.dialog-title {
    background-color: #fff;
    height: 30px;
    flex: none;
    display: flex;
    align-items: center;
    padding: 0 17px 1px 7px;
    gap: 38px;
}
.dialog-title span {
    flex: 1;
}
.dialog-title button {
    display: flex;
    font-size: 14px;
}
.dialog-tabs {
    display: flex;
    align-items: flex-end;
    height: 30px;
    padding-left: 7px;
    flex: none;
    position: relative;
}
.dialog-tabs button {
    height: 20px;
    padding: 0 4px;
    border: 1px solid #d9d9d9;
    border-bottom: none;
}
.dialog-tabs .active {
    height: 24px;
    padding: 0 8px 3px;
    background-color: #fff;
    margin: 0 0 -1px;
    z-index: 1;
}
.mark {
    position: absolute;
    border: 3px solid #ff3838;
    pointer-events: none;
    z-index: 2;
}
.mark-tab {
    left: 74px;
    top: -1px;
    width: 72px;
    height: 37px;
}
.dialog-panel {
    flex: 1;
    margin: 0 7px 0 5px;
    border: 1px solid #d9d9d9;
    background-color: #fff;
    display: flex;
    padding: 12px 12px 12px 14px;
}
.kinds {
    width: 107px;
    border-right: 1px solid #c3c3c3;
    color: #595959;
    padding-right: 11px;
}
.kinds li {
    position: relative;
    height: 24px;
}
.kinds button {
    display: flex;
    align-items: center;
    gap: 12px;
    width: 100%;
    height: 23px;
    padding-left: 2px;
    white-space: nowrap;
}
.kinds svg {
    width: 16px;
    height: 16px;
    flex: none;
}
.kinds .active button {
    background-color: #c5c5c5;
    border: 1px dotted #262626;
    padding-left: 1px;
    color: #262626;
}
.mark-kind {
    left: -4px;
    top: -2px;
    width: 109px;
    height: 34px;
}
.detail {
    flex: 1;
    padding-left: 11px;
}
.subtypes {
    display: flex;
    border-bottom: 1px solid #c3c3c3;
    height: 63px;
}
.subtypes button {
    width: 56px;
    height: 56px;
}
.subtypes .active {
    background-color: #c5c5c5;
}
.subtypes svg {
    display: block;
}
.preview-area {
    position: relative;
}
.preview-area h2 {
    font-size: 17px;
    line-height: 34px;
    padding-left: 1px;
}
.previews {
    display: flex;
}
.preview {
    width: 225px;
    height: 139px;
    border: 4px solid transparent;
    display: block;
}
.preview.active {
    border-color: #c5c5c5;
}
.preview svg {
    display: block;
    width: 217px;
    height: 131px;
    border: 1px solid #e3e3e3;
    fill: #595959;
}
.preview .chart-title {
    font-size: 9px;
    text-anchor: middle;
}
.preview .axis {
    font-size: 5px;
    text-anchor: end;
}
.preview .legend {
    font-size: 5px;
}
.mark-preview {
    left: 1px;
    top: 0;
    width: 230px;
    height: 210px;
}
.dialog-foot {
    height: 41px;
    flex: none;
    display: flex;
    justify-content: flex-end;
    gap: 11px;
    padding: 6px 7px 0 0;
    position: relative;
}
.dialog-foot button {
    width: 73px;
    height: 25px;
    border: 1px solid #adadad;
    background-color: #e1e1e1;
}
.dialog-foot .primary {
    border: 2px solid #0078d7;
}
.mark-ok {
    right: 84px;
    bottom: 0;
    width: 166px;
    height: 70px;
}
.resize {
    position: absolute;
    right: 1px;
    bottom: 1px;
}
```
